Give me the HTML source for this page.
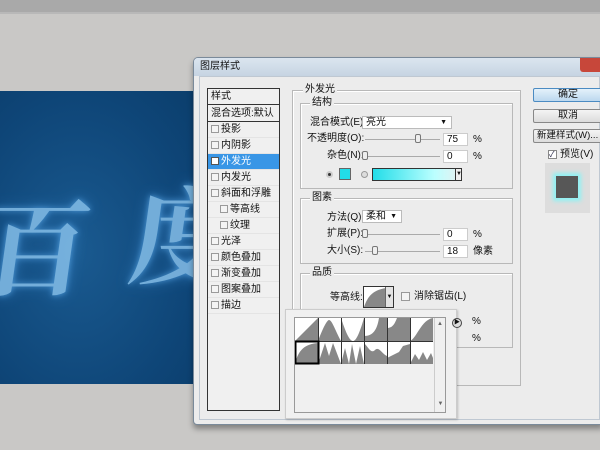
<!DOCTYPE html>
<html><head><meta charset="utf-8"><style>
*{margin:0;padding:0;box-sizing:border-box}
body{width:600px;height:450px;overflow:hidden;background:#c9c8c6;position:relative;font-family:"Liberation Sans","Noto Sans CJK SC",sans-serif;font-size:10px;line-height:12px;color:#111}
.a{position:absolute;white-space:nowrap}
.row{position:absolute;left:208px;width:71px;height:16px;line-height:16px;padding-left:3px;border-bottom:1px solid #e4e4e4;white-space:nowrap}
.cb{display:inline-block;width:8px;height:8px;border:1px solid #9a9a9a;background:#f4f4f4;margin-right:2px;vertical-align:-1px}
.box{position:absolute;border:1px solid #b8b8b8;box-shadow:1px 1px 0 #fff inset}
.lbl{position:absolute;background:#ececec;padding:0 2px;line-height:12px}
.inp{position:absolute;background:#fff;border:1px solid #ccc;height:13px;line-height:11px;padding-left:3px}
.sl{position:absolute;height:1px;background:#aaa}
.btn{position:absolute;border:1px solid #888;border-radius:2px;background:linear-gradient(#f4f4f4,#dcdcdc);text-align:center;line-height:12px;height:14px;white-space:nowrap;overflow:hidden}
</style></head><body>
<div class="a" style="left:0;top:0;width:600px;height:12px;background:#a9a9a9"></div>
<div class="a" style="left:0;top:12px;width:600px;height:2px;background:#b8b8b8"></div>
<!-- canvas -->
<div class="a" style="left:0;top:91px;width:196px;height:293px;background:radial-gradient(ellipse at 40% 55%,#1a5a90,#0e4577 70%,#0b3e6c);overflow:hidden">
<div class="a" style="left:-14px;top:92px;font-size:105px;line-height:120px;color:#8cc6f0;font-family:'Noto Serif CJK SC',serif;font-weight:bold;text-shadow:0 0 6px #5aa8e8,0 0 14px #3b86c9;opacity:.8;transform:skewX(-8deg)">百</div>
<div class="a" style="left:132px;top:80px;font-size:105px;line-height:120px;color:#8cc6f0;font-family:'Noto Serif CJK SC',serif;font-weight:bold;text-shadow:0 0 6px #5aa8e8,0 0 14px #3b86c9;opacity:.8;transform:skewX(-8deg)">度</div>
</div>
<!-- dialog -->
<div class="a" style="left:193px;top:57px;width:410px;height:368px;background:#ececec;border:1px solid #7a8a9a;border-radius:5px 0 0 4px;box-shadow:0 4px 6px rgba(0,0,0,.35)"></div>
<div class="a" style="left:194px;top:58px;width:406px;height:18px;background:linear-gradient(#dbe5ef,#c6d4e2);border-radius:4px 0 0 0"></div>
<div class="a" style="left:200px;top:61px">图层样式</div>
<div class="a" style="left:580px;top:58px;width:20px;height:14px;background:#c7473a;border-radius:0 0 0 3px"></div>
<div class="a" style="left:199px;top:76px;width:401px;height:344px;background:#ececec;border:1px solid #bfc8d2"></div>
<!-- list -->
<div class="a" style="left:207px;top:88px;width:73px;height:323px;background:#f0f0f0;border:1px solid #333"></div>
<div class="row" style="top:89px;border-bottom:1px solid #333">样式</div>
<div class="row" style="top:106px;border-bottom:1px solid #333">混合选项:默认</div>
<div class="row" style="top:122px"><span class="cb"></span>投影</div>
<div class="row" style="top:138px"><span class="cb"></span>内阴影</div>
<div class="row" style="top:154px;background:#3996e6;color:#fff"><span class="cb" style="background:#fff;border-color:#555"></span>外发光</div>
<div class="row" style="top:170px"><span class="cb"></span>内发光</div>
<div class="row" style="top:186px"><span class="cb"></span>斜面和浮雕</div>
<div class="row" style="top:202px;padding-left:12px"><span class="cb"></span>等高线</div>
<div class="row" style="top:218px;padding-left:12px"><span class="cb"></span>纹理</div>
<div class="row" style="top:234px"><span class="cb"></span>光泽</div>
<div class="row" style="top:250px"><span class="cb"></span>颜色叠加</div>
<div class="row" style="top:266px"><span class="cb"></span>渐变叠加</div>
<div class="row" style="top:282px"><span class="cb"></span>图案叠加</div>
<div class="row" style="top:298px"><span class="cb"></span>描边</div>
<!-- main group -->
<div class="box" style="left:292px;top:90px;width:229px;height:296px"></div>
<div class="lbl" style="left:303px;top:84px">外发光</div>
<div class="box" style="left:300px;top:103px;width:213px;height:86px"></div>
<div class="lbl" style="left:310px;top:97px">结构</div>
<div class="a" style="left:310px;top:117px">混合模式(E):</div>
<div class="inp" style="left:362px;top:116px;width:90px;border-color:#bbb">亮光<span style="position:absolute;right:4px;font-size:7px">▼</span></div>
<div class="a" style="left:307px;top:133px">不透明度(O):</div>
<div class="sl" style="left:365px;top:139px;width:75px"></div>
<div class="a" style="left:415px;top:134px;width:6px;height:9px;border:1px solid #777;background:#eee;border-radius:2px"></div>
<div class="inp" style="left:443px;top:133px;width:25px">75</div><div class="a" style="left:473px;top:134px">%</div>
<div class="a" style="left:327px;top:150px">杂色(N):</div>
<div class="sl" style="left:365px;top:156px;width:75px"></div>
<div class="a" style="left:362px;top:151px;width:6px;height:9px;border:1px solid #777;background:#eee;border-radius:2px"></div>
<div class="inp" style="left:443px;top:150px;width:25px">0</div><div class="a" style="left:473px;top:151px">%</div>
<div class="a" style="left:326px;top:171px;width:7px;height:7px;border-radius:50%;background:#333;border:2px solid #ccc"></div>
<div class="a" style="left:339px;top:168px;width:12px;height:12px;background:#22dde8;border:1px solid #666"></div>
<div class="a" style="left:361px;top:171px;width:7px;height:7px;border-radius:50%;background:#ddd;border:1px solid #999"></div>
<div class="a" style="left:372px;top:168px;width:90px;height:13px;border:1px solid #333;background:linear-gradient(90deg,#22dde8,#bff 70%,#e8f0f0)"></div>
<div class="a" style="left:455px;top:168px;width:7px;height:13px;border:1px solid #333;background:#eee;font-size:6px;line-height:11px;text-align:center">▼</div>
<div class="box" style="left:300px;top:198px;width:213px;height:66px"></div>
<div class="lbl" style="left:310px;top:192px">图素</div>
<div class="a" style="left:327px;top:212px">方法(Q):</div>
<div class="inp" style="left:362px;top:210px;width:40px;border-color:#bbb">柔和<span style="position:absolute;right:4px;font-size:7px">▼</span></div>
<div class="a" style="left:327px;top:228px">扩展(P):</div>
<div class="sl" style="left:365px;top:234px;width:75px"></div>
<div class="a" style="left:362px;top:229px;width:6px;height:9px;border:1px solid #777;background:#eee;border-radius:2px"></div>
<div class="inp" style="left:443px;top:228px;width:25px">0</div><div class="a" style="left:473px;top:229px">%</div>
<div class="a" style="left:327px;top:245px">大小(S):</div>
<div class="sl" style="left:365px;top:251px;width:75px"></div>
<div class="a" style="left:372px;top:246px;width:6px;height:9px;border:1px solid #777;background:#eee;border-radius:2px"></div>
<div class="inp" style="left:443px;top:245px;width:25px">18</div><div class="a" style="left:473px;top:246px">像素</div>
<div class="box" style="left:300px;top:273px;width:213px;height:75px"></div>
<div class="lbl" style="left:310px;top:267px">品质</div>
<div class="a" style="left:330px;top:292px">等高线:</div>
<div class="a" style="left:363px;top:286px;width:31px;height:22px;border:1px solid #333;background:#fff;overflow:hidden"><svg width="22" height="20"><path d="M0 20 C4 8 10 3 22 1 L22 20Z" fill="#888"/></svg><div class="a" style="right:0;top:0;width:8px;height:20px;background:#e4e4e4;border-left:1px solid #666;font-size:6px;line-height:20px;text-align:center">▼</div></div>
<div class="a" style="left:401px;top:292px;width:9px;height:9px;border:1px solid #999;background:#f4f4f4"></div>
<div class="a" style="left:414px;top:291px">消除锯齿(L)</div>
<div class="a" style="left:472px;top:316px">%</div>
<div class="a" style="left:472px;top:333px">%</div>
<!-- right buttons -->
<div class="btn" style="left:533px;top:88px;width:70px;background:linear-gradient(#e4f1fb,#bcd8ef);border-color:#4b8bc2">确定</div>
<div class="btn" style="left:533px;top:109px;width:70px">取消</div>
<div class="btn" style="left:533px;top:129px;width:70px;text-align:left;padding-left:3px;font-size:9.5px">新建样式(W)...</div>
<div class="a" style="left:548px;top:150px;width:9px;height:9px;border:1px solid #888;background:#fff;font-size:8px;line-height:8px;color:#224">✓</div>
<div class="a" style="left:560px;top:149px">预览(V)</div>
<div class="a" style="left:545px;top:163px;width:45px;height:50px;background:#ddd"></div>
<div class="a" style="left:556px;top:176px;width:22px;height:22px;background:#575757;box-shadow:0 0 4px 3px #8ef2f4"></div>
<!-- popup -->
<div class="a" style="left:285px;top:309px;width:172px;height:110px;background:#f0f0f0;border:1px solid #ccc;box-shadow:1px 1px 2px rgba(0,0,0,.2)"></div>
<div class="a" style="left:294px;top:317px;width:152px;height:96px;background:#f0f0f0;border:1px solid #999"></div>
<div class="a" style="left:434px;top:318px;width:11px;height:94px;border-left:1px solid #ccc;font-size:6px;color:#666;text-align:center">▲<div style="position:absolute;bottom:2px;width:11px">▼</div></div>
<div class="a" style="left:452px;top:318px;width:10px;height:10px;border-radius:50%;border:1px solid #444;background:#ddd;font-size:6px;line-height:8px;text-align:center">▶</div>
<svg class="a" style="left:295px;top:318px" width="140" height="47">
<g fill="#888" stroke="none">
<rect x="0" y="0" width="23" height="23" fill="#fff"/><path d="M0 23 L23 0 L23 23Z"/>
<rect x="23" y="0" width="23" height="23" fill="#fff"/><path d="M23 23 C28 10 32 2 34 2 C37 2 40 12 46 23Z"/>
<rect x="46" y="0" width="23" height="23" fill="#fff"/><path d="M46 0 C50 12 54 23 58 23 C62 23 66 10 69 0 L69 23 L46 23Z"/>
<rect x="69" y="0" width="23" height="23" fill="#fff"/><path d="M69 18 C78 18 82 12 84 0 L92 0 L92 23 L69 23Z"/>
<rect x="92" y="0" width="23" height="23" fill="#fff"/><path d="M92 23 L92 10 C98 10 100 5 102 0 L115 0 L115 23Z"/>
<rect x="115" y="0" width="23" height="23" fill="#fff"/><path d="M115 23 C122 20 126 2 138 0 L138 23Z"/>
<rect x="0" y="23" width="23" height="23" fill="#fff"/><path d="M0 46 C3 32 10 26 23 25 L23 46Z"/>
<rect x="23" y="23" width="23" height="23" fill="#fff"/><path d="M23 46 L30 25 L34 38 L38 25 L46 46Z"/>
<rect x="46" y="23" width="23" height="23" fill="#fff"/><path d="M46 46 L50 30 L54 46 L57 26 L61 46 L65 28 L69 46Z"/>
<rect x="69" y="23" width="23" height="23" fill="#fff"/><path d="M69 46 L69 25 C74 30 76 36 80 32 C84 28 87 36 92 38 L92 46Z"/>
<rect x="92" y="23" width="23" height="23" fill="#fff"/><path d="M92 46 L92 40 L100 36 L104 34 L108 28 L115 26 L115 46Z"/>
<rect x="115" y="23" width="23" height="23" fill="#fff"/><path d="M115 46 L120 36 L124 42 L128 34 L132 42 L136 35 L138 40 L138 46Z"/>
</g>
<g stroke="#333" fill="none" stroke-width="1"><path d="M0.5 23.5H138M23.5 0V46M46.5 0V46M69.5 0V46M92.5 0V46M115.5 0V46"/></g>
<rect x="0.5" y="23.5" width="23" height="22" fill="none" stroke="#000" stroke-width="2"/>
</svg>
</body></html>
